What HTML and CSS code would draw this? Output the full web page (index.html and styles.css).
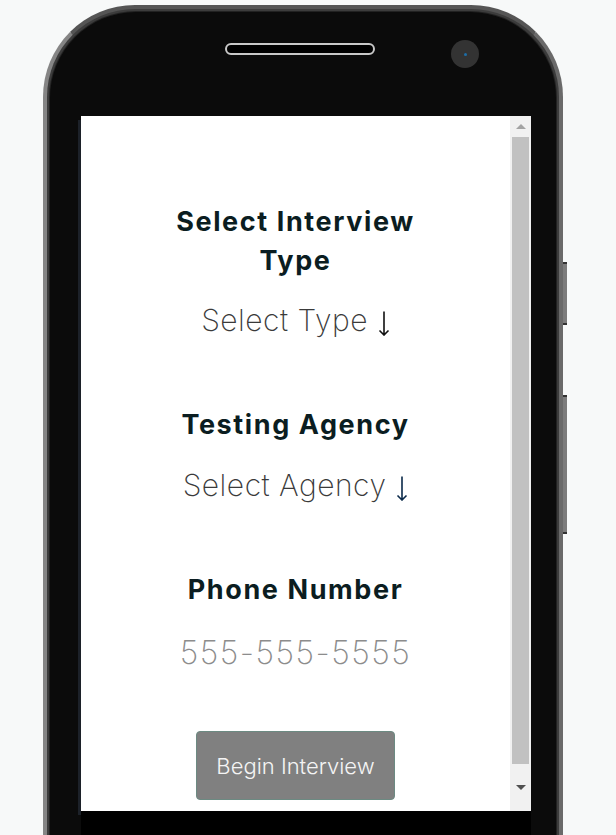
FILE: index.html
```html
<!DOCTYPE html>
<html lang="en">
<head>
<meta charset="utf-8">
<title>Interview</title>
<link rel="stylesheet" href="styles.css">
</head>
<body>
<div class="stage">
  <div class="shell">
    <div class="body">
      <div class="top">
        <div class="speaker"></div>
        <div class="camera"><span class="lens"></span></div>
      </div>
      <div class="screen">
        <div class="content">
          <h2 class="label first">Select Interview<br>Type</h2>
          <div class="select">Select Type <svg class="arrow" width="12" height="25" viewBox="0 0 12 25"><path d="M6 0.5V24M1.5 19.5L6 24L10.5 19.5" fill="none" stroke="currentColor" stroke-width="1.6"/></svg></div>
          <h2 class="label">Testing Agency</h2>
          <div class="select second">Select Agency <svg class="arrow navy" width="12" height="25" viewBox="0 0 12 25"><path d="M6 0.5V24M1.5 19.5L6 24L10.5 19.5" fill="none" stroke="currentColor" stroke-width="1.6"/></svg></div>
          <h2 class="label">Phone Number</h2>
          <div class="phone">555-555-5555</div>
          <button class="begin">Begin Interview</button>
        </div>
        <div class="scrollbar">
          <div class="sb-btn up"></div>
          <div class="thumb"></div>
          <div class="sb-btn down"></div>
        </div>
      </div>
      <div class="chin"></div>
    </div>
    <div class="btn-side vol"></div>
    <div class="btn-side power"></div>
  </div>
</div>
</body>
</html>
```
FILE: styles.css
```css
html, body {
  margin: 0;
  padding: 0;
  height: 100%;
  overflow: hidden;
  background: #f7f9f9;
}
.stage {
  padding: 5px 0 0 43px;
}
.shell {
  position: relative;
  width: 512px;
  height: 900px;
  border: 4px solid #858585;
  border-bottom: none;
  border-top-color: #555;
  border-right-color: #6a6a6a;
  border-radius: 92px 92px 0 0;
  background: #3c3c3c;
}
.body {
  margin: 3px 3px 0 3px;
  height: 897px;
  background: #0b0b0b;
  border-radius: 86px 86px 0 0;
  box-shadow: 0 0 0 1px #222;
  padding-left: 31px;
  padding-right: 25px;
  display: flex;
  flex-direction: column;
}
.top {
  height: 104px;
  flex: none;
  display: flex;
  align-items: flex-start;
}
.speaker {
  margin: 31px 0 0 144px;
  width: 146px;
  height: 8px;
  border: 2px solid #c8c8c8;
  border-radius: 7px;
  background: #000;
}
.camera {
  margin: 28px 0 0 76px;
  width: 28px;
  height: 28px;
  border-radius: 50%;
  background: #333;
  display: flex;
  align-items: center;
  justify-content: center;
}
.lens {
  width: 3px;
  height: 3px;
  border-radius: 50%;
  background: #1d6ea8;
}
.screen {
  flex: none;
  height: 695px;
  width: 450px;
  display: flex;
  background: #fff;
  box-shadow: -3px 4px 0 #1c2129;
}
.content {
  flex: 1;
  display: flex;
  flex-direction: column;
  align-items: center;
  text-align: center;
  font-family: Inter, "Liberation Sans", sans-serif;
}
.label {
  margin: 65px 0 0;
  font-size: 27px;
  line-height: 39px;
  font-weight: 700;
  color: #0b1d21;
  letter-spacing: 1.6px;
}
.label.first {
  margin-top: 86px;
}
.select {
  margin-top: 20px;
  font-size: 30px;
  line-height: 40px;
  font-weight: 200;
  color: #3a3a3a;
  letter-spacing: 0.5px;
}
.select.second {
  margin-top: 21px;
}
.arrow {
  color: #111;
  vertical-align: -5px;
  margin-left: 1px;
}
.arrow.navy {
  color: #0b2a4a;
}
.phone {
  margin-top: 24px;
  font-size: 32px;
  line-height: 40px;
  font-weight: 200;
  color: #8c8c8c;
  letter-spacing: 1.5px;
}
.begin {
  margin-top: 58px;
  width: 199px;
  height: 69px;
  background: #808080;
  border: 1px solid #6c8a82;
  border-radius: 4px;
  color: #f4f4f4;
  font-family: Inter, "Liberation Sans", sans-serif;
  font-size: 22px;
  font-weight: 300;
  padding: 0;
}
.scrollbar {
  width: 21px;
  flex: none;
  background: #f1f1f1;
  display: flex;
  flex-direction: column;
  align-items: center;
}
.sb-btn {
  height: 21px;
  width: 100%;
  flex: none;
  display: flex;
  align-items: center;
  justify-content: center;
}
.sb-btn::before {
  content: "";
  border-left: 5px solid transparent;
  border-right: 5px solid transparent;
}
.up::before {
  border-bottom: 5px solid #a3a3a3;
}
.down {
  margin-top: auto;
  height: 47px;
}
.down::before {
  border-top: 5px solid #505050;
}
.thumb {
  width: 17px;
  height: 627px;
  background: #c1c1c1;
}
.chin {
  flex: 1;
  width: 450px;
  background: #000;
}
.btn-side {
  position: absolute;
  right: -8px;
  width: 4px;
  background: #7c7c7c;
  border-top: 2px solid #333;
  border-bottom: 2px solid #333;
}
.vol {
  top: 253px;
  height: 59px;
}
.power {
  top: 386px;
  height: 135px;
}
```
